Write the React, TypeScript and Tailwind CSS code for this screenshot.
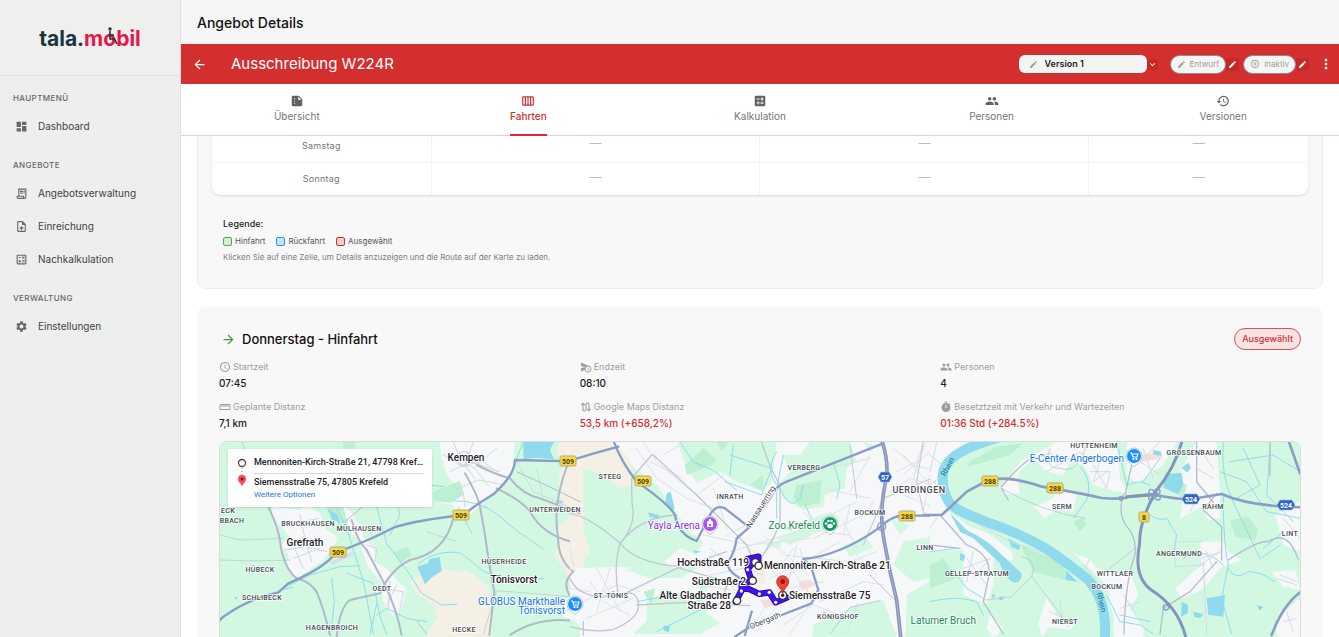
import type { ReactNode } from "react";
import {
  MdAccessTime,
  MdArrowBack,
  MdArrowForward,
  MdCalculate,
  MdCalendarViewWeek,
  MdDashboard,
  MdEdit,
  MdExpandMore,
  MdHistory,
  MdMoreVert,
  MdOutlineCalculate,
  MdOutlineReceiptLong,
  MdOutlineUploadFile,
  MdPauseCircleOutline,
  MdPeople,
  MdScheduleSend,
  MdSettings,
  MdStraighten,
  MdSummarize,
  MdTimer,
} from "react-icons/md";

const navigation = [
  {
    title: "Hauptmenü",
    items: [{ label: "Dashboard", icon: MdDashboard }],
  },
  {
    title: "Angebote",
    items: [
      { label: "Angebotsverwaltung", icon: MdOutlineReceiptLong },
      { label: "Einreichung", icon: MdOutlineUploadFile },
      { label: "Nachkalkulation", icon: MdOutlineCalculate },
    ],
  },
  {
    title: "Verwaltung",
    items: [{ label: "Einstellungen", icon: MdSettings }],
  },
];

const tabs = [
  { label: "Übersicht", icon: MdSummarize },
  { label: "Fahrten", icon: MdCalendarViewWeek, active: true },
  { label: "Kalkulation", icon: MdCalculate },
  { label: "Personen", icon: MdPeople },
  { label: "Versionen", icon: MdHistory },
];

const legend = [
  { label: "Hinfahrt", color: "border-[#4caf50] bg-[#d4ecd5]" },
  { label: "Rückfahrt", color: "border-[#2196f3] bg-[#c9e4fa]" },
  { label: "Ausgewählt", color: "border-[#d32f2f] bg-[#f3cdcd]" },
];

const RouteIcon = () => (
  <svg viewBox="0 0 24 24" className="h-3 w-3" fill="none" stroke="currentColor" strokeWidth="2.2">
    <path d="M6 5v12q0 3 3 3t3-3V7q0-3 3-3t3 3v12" />
    <path d="M2.500 8 6 4.500 9.500 8M14.500 16 18 19.500 21.500 16" />
  </svg>
);

const details = [
  { label: "Startzeit", value: "07:45", icon: <MdAccessTime size={12} /> },
  { label: "Endzeit", value: "08:10", icon: <MdScheduleSend size={12} /> },
  { label: "Personen", value: "4", icon: <MdPeople size={12} /> },
  { label: "Geplante Distanz", value: "7,1 km", icon: <MdStraighten size={12} /> },
  { label: "Google Maps Distanz", value: "53,5 km (+658,2%)", icon: <RouteIcon />, alert: true },
  {
    label: "Besetztzeit mit Verkehr und Wartezeiten",
    value: "01:36 Std (+284.5%)",
    icon: <MdTimer size={12} />,
    alert: true,
  },
];

const districts: [string, number, number][] = [
  ["STEEG", 390, 37],
  ["UNTERWEIDEN", 335, 70],
  ["BRUCKHAUSEN", 88, 84],
  ["MÜLHAUSEN", 139, 89],
  ["HÜBECK", 40, 130],
  ["SCHLIBECK", 42, 158],
  ["OEDT", 162, 149],
  ["HAGENBROICH", 112, 188],
  ["HÜSERHEIDE", 284, 122],
  ["HECKE", 244, 190],
  ["ECK", 8, 71],
  ["BBACH", 12, 81],
  ["ST. TÖNIS", 391, 156],
  ["INRATH", 510, 57],
  ["VERBERG", 584, 28],
  ["BOCKUM", 650, 73],
  ["LINN", 705, 108],
  ["KÖNIGSHOF", 618, 177],
  ["GELLEP-STRATUM", 757, 134],
  ["HÜTTENHEIM", 874, 6],
  ["GROSSENBAUM", 974, 13],
  ["SERM", 842, 67],
  ["RAHM", 993, 67],
  ["ANGERMUND", 959, 114],
  ["WITTLAER", 895, 134],
  ["BOCKUM", 887, 147],
  ["LINT", 1070, 94],
  ["NIERST", 845, 182],
];

const towns: [string, number, number][] = [
  ["Kempen", 246, 19],
  ["Grefrath", 85, 104],
  ["Tönisvorst", 294, 141],
];

const shields: [string, number, number][] = [
  ["509", 348, 19],
  ["509", 423, 39],
  ["509", 241, 73],
  ["509", 118, 110],
  ["288", 770, 39],
  ["288", 835, 46],
  ["288", 687, 74],
  ["8", 924, 75],
];

const motorways: [string, number, number][] = [
  ["57", 665, 35],
  ["524", 971, 57],
  ["524", 1066, 63],
];

const Pin = ({ x, y, color, children }: { x: number; y: number; color: string; children: ReactNode }) => (
  <g transform={`translate(${x} ${y})`}>
    <path d="M0 11C-2 8-8 6-8 0a8 8 0 0 1 16 0C8 6 2 8 0 11Z" fill="#fff" stroke="#9aa5b1" strokeWidth=".6" />
    <circle r="7" fill={color} />
    {children}
  </g>
);

const Cart = () => (
  <g fill="none" stroke="#fff" strokeWidth="1.200">
    <path d="M-4-3h1.500l1.500 4h4l1-3h-6" />
    <circle cx="-.5" cy="3" r=".5" />
    <circle cx="2.500" cy="3" r=".5" />
  </g>
);

// Terrain is drawn at three units per map pixel, labels at one
const Terrain = () => (
  <g transform="scale(.33333)" strokeLinejoin="round" strokeLinecap="round">
    <rect width="3240" height="960" fill="#d3f8e2" />

    {/* west: Grefrath, Kempen */}
    <g transform="translate(-30 -21)">
      <path fill="#f5f0e6" d="M600 440 640 415 700 400 740 412 770 405 830 450 850 520 845 597 850 900 660 900 650 597 682 550 670 510 640 490 615 470ZM1045 130 1060 85 1040 60 1050 21H1120V430L1080 440 1060 400 1030 360 1050 330 1045 280 1080 240 1050 200Z" />
      <g fill="#f6f7f9">
        <path d="M690 21C692 90 715 130 735 150L690 175 692 205 730 210 735 232 765 250 820 205 880 150 905 110 915 21Z" />
        <path d="M215 330 240 305 185 240 190 215 268 225 290 210 330 235 345 280 385 310 340 375 310 395 260 430 230 400 236 360Z" />
        <path d="M400 215 425 230 440 260 470 280 455 300 492 340 500 385 530 400 555 430 588 460 578 512 550 545 520 500 512 440 470 390 450 320 420 290Z" />
        <path d="M1080 480 1095 445 1120 430V560L1060 545 1050 520Z" />
      </g>
      <path fill="#bdefd2" d="M350 215h50l12 55-50-15ZM670 170l80-32 12 40-40 25-50-5ZM550 352l40-16 16 24-36 24ZM400 21h35v20h-35Z" />
      <g fill="#90daee">
        <path d="M940 21h92l-12 24 12 28-50-5-42 4ZM622 395l32-10 5-14 30-5 6 42-28 18-22 22ZM1040 195l20 3-4 8-18-4ZM72 487l12-2-4 9ZM352 222l30 15 8 25-22-8Z" />
      </g>
      <g fill="none" stroke="#90daee" strokeWidth="3">
        <path d="M96 21l8 22M380 220l30 60 25 80q30 90 35 130l20 107M500 215q15 60 30 110l60 80 45 70 60 35 45-2M730 197q80 0 130 40l60 50 80 55M625 385q60-45 130-30l60 50q60 40 185 25M220 460l80-40 90-25 60-3M365 430l8 70-10 90M500 540l30-20 60 30 60 10M540 300l30-60-12-50M660 150l40 5M940 21l-20 50M480 597l20-90M650 597l-30-40M745 215l40 80M210 465l40-8M410 290l-35-40" />
        <path d="M410 415l80 30 20 100 20 52" />
      </g>
      <g fill="none" stroke="#cfd7e1" strokeWidth="3">
        <path d="M225 345l60-10 65 15M240 310l40 90M270 240l15 70 20 70M235 270l90-20M250 370l80-30M700 60l60 30 60-10 40 30M720 110l60-30 90 30M730 21l20 50 45 30 40 50M790 21l-25 70 30 40M860 40l-60 50M735 165l70-30 80 15M740 190l20-15 5 40M470 330l30 10-5 40M520 460l60 10-10 50M540 440l-5 80M560 450l-30 60M920 80l50 90 140 60M1000 190l-20-90M1085 470l25 20M1060 530l50-20" />
        <path stroke="#bfd9cf" d="M30 375q120 5 210 0M30 300l60 15 130-5M650 290l90 30M820 597l40-130 250 20" />
      </g>
      <g fill="none" stroke="#afb9ca" strokeWidth="6">
        <path d="M170 205q40 80 42 130 14 70 48 95 45 12 62 45 20 50 38 125M380 605q10-90 40-110l90-20q30-70 90-100 105-20 130-125M425 255q15 60 45 90l50 95q40 80 55 160M765 115q40 70 45 100l15 85q12 90 28 170l-15 130M860 160q80 40 100 70 40 70 125 90 20 0 35 15M800 90q60 30 100 40 40 50 90 60l120 45M1072 90q-45 120-28 215 0 70 46 105-35 30-12 70M900 600q90-60 210-40" />
        <path strokeWidth="3" d="M920 110q90 40 190 90M405 260l70-60" />
        <circle cx="762" cy="72" r="22" strokeWidth="4" stroke="#cbd6df" />
      </g>
      <path fill="#d5dcec" d="M362 380l65-30 3 10-64 30Z" />
      <path fill="none" stroke="#8b9cc5" strokeWidth="7" d="M25 560 40 545Q120 490 205 472L235 445Q330 405 368 365L385 350Q480 315 550 278 620 255 760 240 790 215 850 178 915 120 915 75L1120 80" />
    </g>

    {/* centre: Krefeld */}
    <g transform="translate(1050 -21)">
      <path fill="#f6f7f9" d="M130 21H1110V900H0V430L20 400 120 395 260 400 330 340 380 360 400 320 360 290 325 240 260 150 190 95Z" />
      <path fill="#f5f0e6" d="M0 21H125L180 70 185 150 150 160 100 120 60 105 0 85ZM0 250 25 275 50 310 60 350 30 395 0 405ZM535 340 565 345 590 440 560 460 545 400Z" />
      <g fill="#d3f8e2">
        <path d="M325 21H620L612 90 600 150 570 165 500 140 450 110 380 145 350 100 335 60ZM640 60 690 60 720 21 840 21 860 80 830 100 825 160 765 180 760 215 700 225 640 190 625 150 660 110Z" />
        <path d="M170 405 260 360 310 400 400 390 330 430 240 430ZM230 500l50-30 120 15 10 50 40 30-60 32H190l40-40ZM0 550l30 20v330H0ZM620 310l60-20 20-30 80-30 30 20-60 40-90 40ZM780 545l70-30 90-20 40 110-30 295H700l30-330ZM1000 320l110-20v120l-80 20-60-50ZM960 250l60 20-30 30ZM820 330l70-20 20 30-70 25ZM1010 480l100-60v480h-110ZM435 430l-70 15 40 25ZM585 325l50-10-5 20-40 5ZM880 21l40 10-20 20Z" />
      </g>
      <path fill="#bdefd2" d="M345 90 400 40 440 75 425 90 350 120ZM440 21h35l-20 30ZM680 150l75-15-5 70-60 10-20-30ZM220 470l35-10-10 50ZM540 150l40-30v50ZM640 280l30-10-5 20Z" />
      <path fill="#fbdcdc" d="M685 440l35-8 15 20-40 15ZM570 495l50-5 5 20-40 8Z" />
      <g fill="#90daee">
        <path d="M235 232l30 8 5 12-32-7ZM290 175l12-5 12 50-10 10-18-30ZM280 572l20 2-4 18-14-5ZM370 345l25 5-22 5ZM1100 80l15 5v50l-15-5Z" />
      </g>
      <g fill="none" stroke="#90daee" strokeWidth="3">
        <path d="M330 21l40 60 60 25 70 60M490 30l-10 90M480 60l125 40-30 80-110-40M620 50q-40 60 10 110 30 70 60 30l10-40M640 60l-20 100 0 90M790 80l20 70-10 40M200 500l80-15 110 10M260 590l140-70M705 210l20 40" />
      </g>
      <g fill="none" stroke="#dce1e9" strokeWidth="3">
        <path d="M200 40l60 90 90 60 80 30M220 21l40 60 120 100M280 60l50-30M240 80l100 50M430 160l40 120M380 180l80-60M470 300l80-40 60-90M400 300l140 30 180-20M480 350l200-60 180-90M580 300l60 60 200 20 80-30M560 360l100 100 100-20M620 330l80 80M650 470l30-140M600 430l120-60 90-50M590 520l60-100 40-20M560 560l50-90M660 400l50 60 10 40M670 340l-50 70M420 420l100-20 60 20M380 450l140 20M420 340l60 50M700 230l60 60 80 10M730 310l150-70 30-40M820 260l40 80M840 210l-20 90M760 160l140 30M900 60l-60 110M780 100l120-30M970 40l60 50 80 20M980 110l60-30 30-60M1000 60l90 100M960 170l60-40 90 30M1060 21l-40 150M1090 40l-90 80M1000 180l100 40M1080 120l-20 110M0 460l60 10M60 440l40 60 80 40M40 500l100-50 70 20M80 400l70 130M120 400l-40 130M50 550l140-60M560 590l80-100M640 570l90-60 80 30M660 597l60-90M750 500l130-60 60 10M830 597l30-90M860 360l60 60M690 340l20 80M10 390l-10-50" />
      </g>
      <g fill="none" stroke="#bfc7d4">
        <path d="M185 130q0 90 5 100 0 50-40 98-20 60-5 155M0 235q60 10 150 90 50 60 180 70M150 325q60-80 170-85M145 485 320 400 470 350M0 430q30 70 145 50 50-20 60 20 10 50-80 85-60 8-125-10M200 510l150-8 190 10M575 21q20 70 55 130v110q-20 60-60 110M250 60 390 190 530 330 560 400M330 400l140 40M470 450l-20 70M40 560v40M185 130l60-70" strokeWidth="4" />
        <path d="M780 597l60-80 90-20M900 420l80 80M1110 240q-30 20-50-10l-20-90 20-119M860 190l-20-160M880 330l60-140 170-70" strokeWidth="3" />
      </g>
      <g fill="none" stroke="#8b9cc5" strokeWidth="7">
        <path d="M-10 80Q70 55 145 35M130 15q20 60 70 125 100 70 115 100 10 60 65 78l35-68q20-45 50-30l70 55M940 25 650 140q-30 10-50 50l-60 85-40 35q-5 40-25 70-10 30 55 60M700 372q110-10 230-95 40-40 80-35h100M705 375l20 25 20 65-20 40-90 35-95 35-45 30M525 600l20-70" />
        <path stroke="#8594ba" strokeWidth="11" d="M935 15q20 60 15 110-25 110-8 190 15 90 38 180l12 110" />
        <path stroke="#b9c4dc" strokeWidth="2" d="M935 15q20 60 15 110-25 110-8 190 15 90 38 180l12 110" />
        <circle cx="935" cy="275" r="12" strokeWidth="4" />
      </g>
    </g>

    {/* east: Rhein, Angermund */}
    <g transform="translate(2130 -21)">
      <g fill="#f6f7f9">
        <path d="M0 21H110L40 75 28 150 50 225 120 275 185 300 245 350 250 375 190 370 190 450 170 510 100 480 100 345 0 350Z" />
        <path d="M275 75 330 50 380 21H560L570 130 595 175 540 165 490 150 460 90 420 80 400 120 350 110 310 70 260 120 270 175 220 180 215 155ZM590 21H740L700 90 620 145 590 120ZM750 110 800 21 860 21 870 170 870 250 835 255 815 215 750 250 760 190Z" />
        <path d="M310 215 370 190 380 160 440 175 430 230 380 225 345 250ZM430 355 475 370 500 400 560 420 600 410 625 480 600 520 640 580V900H560L550 540 520 440ZM350 490l30 50 60 25-20 20-60-10-25 30-10-40ZM810 320h70l15 30 40 25-60 20-60 70-60 25-20-30 80-70ZM1035 240 1110 200V350L1060 330ZM1025 410l70-5 15 60-50-10ZM1040 550l70-60v410h-60ZM180 540l40 40-30 30-20-30Z" />
      </g>
      <g fill="#bdefd2">
        <path d="M120 80 200 35 280 25 240 60 110 95ZM430 262l28-15 12 20-20 22ZM900 255l55-10 30 40-10 30-60-10ZM270 330l120 50 40 60-120-30ZM0 390l40-20 40 60-80 30ZM720 130l50 20-10 50Z" />
      </g>
      <path fill="#fbdcdc" d="M630 60l60-10 5 20-55 10Z" />
      <g fill="#90daee">
        <path d="M705 118l50-5 5 35-15 30-45-20ZM755 98l20-15 8 15-12 15ZM668 45l25 5 3 12-25-3ZM830 490l55-10-5 65-45-5ZM755 500l20 10-2 25-20 10ZM790 530l30 8-10 12-18-5ZM90 355l15 5-3 18-12-2ZM410 405l12 15 20 20-35-5ZM235 310l35 20-2 15-25-8ZM185 480l8-2 2 8-8 2ZM208 486l12-2-2 10-10 2ZM980 510l20 5-10 12Z" />
        <path d="M60 235 110 285q60 30 90 60l75 70q0 35-30 25-25-20-35-55L130 310 90 290Z" />
      </g>
      <g fill="none" stroke="#90daee" strokeWidth="4">
        <path strokeWidth="30" strokeLinecap="butt" d="M215 5C70 45 35 85 38 130 40 220 80 225 180 265 340 320 390 370 470 430Q530 490 525 600V900" />
        <path d="M450 95q40 40 20 100l-40 55M560 21l30 130q40-20 70 0M880 21q-10 100 30 180l80 170 60-40M900 80l130-20 80 50M870 110l80 30 60 90 100 20M880 180q0 150 15 210l-20 100 30 107M895 400q20 40 60 10 40 0 80 30M1020 40l-10 140 80 80M940 40l50 110-70 40M660 240q30 20 50 10l30 50-10 60M880 390q-60-60-120-20M0 500q80-20 140 0l20 40M0 350l80-10M80 420l30 40 50 30M530 480l40 80 60 10 40 27M570 540l90 20M690 70l-50 70M1060 290l-60 50" strokeWidth="3" />
      </g>
      <g fill="none" stroke="#d3dae4" strokeWidth="3">
        <path d="M0 60l50 40M20 21l-20 90M0 150l40-30M300 75l60-20 50 30M350 110l100-60 40 30M480 110h60l-10 50M490 90l40 70M510 80l-20 60M530 110l-40 30M600 60l90 60M620 90l70-70M640 40l30 90M760 200l50-10M780 230l20-40M810 40l40 60M800 100l50 30M110 370l60 80M130 350l-20 90M100 400l80-30M130 430l50-60M460 390l80 90M480 370l-20 40M580 480l40 60M570 520l60-20M360 530l80 40M390 500l10 70M815 370l60-20M830 350l20 50M810 390l60-40M1060 250l50 60M1050 420l50 20M1040 430l60 20M1060 560l40-10M1070 530l20 60M820 380l10 217M735 320l0 75 90-5M735 320h80M20 250l-20 30M130 260l110 60 90 30" />
      </g>
      <g fill="none" stroke="#b4becc">
        <path d="M580 180q-20 60 15 100 25 30 20 80-30 80-33 237M605 90l-20 90M860 175l-40 50 55 50v100M800 21v120l50 60M895 375q90-60 120-55 60-40 90 55M860 380l-80 90-80 50-10 77M215 155q40-50 80-80M215 160l20 35M30 240l80 90q80 30 65 100l-15 70 60 97M0 330l90 10M1020 21v100" strokeWidth="4" />
        <path d="M215 160q120 70 250 90M360 40q-20 60 30 60 60 20 80-79M305 425l-60 60-80 10M305 425l70 90 40 60M305 425q20-50-30-60M540 400l75-60" strokeWidth="2" />
      </g>
      <g fill="none" stroke="#8b9cc5" strokeWidth="8">
        <path d="M-20 240H35Q90 190 110 170l60-32q60-20 165 17 110 18 180 34 60 5 80-3l80-6q80 15 110 12l90-15q90 40 260 40M1120 465q-60 40-95 135M1075 15l35 100" />
        <path stroke="#8594ba" strokeWidth="9" d="M757 15q-20 80-80 155-50 90-48 155-20 100 35 140 80 50 103 140M590 185l90-8" />
        <g strokeWidth="4">
          <circle cx="664" cy="188" r="8" />
          <circle cx="682" cy="170" r="8" />
          <circle cx="684" cy="188" r="7" />
          <circle cx="664" cy="170" r="7" />
          <circle cx="573" cy="190" r="6" />
          <circle cx="708" cy="517" r="8" />
        </g>
      </g>
    </g>
  </g>
);

const RouteLine = () => (
  <g transform="scale(.33333) translate(1050 -21)" strokeLinejoin="round" strokeLinecap="round">
    <g fill="none">
      <path d="M565 390v-25l-33 7 16 12-15 18 12 36-30 8v20l-18 34M515 460l22 2 31 15 30-5 19 30 34-14" stroke="#2a0cab" strokeWidth="19" />
      <path d="M565 390v-25l-33 7 16 12-15 18 12 36-30 8v20l-18 34M515 460l22 2 31 15 30-5 19 30 34-14" stroke="#3c14e8" strokeWidth="14" />
    </g>
    <g fill="#fff">
      <circle cx="533" cy="404" r="5" />
      <circle cx="514" cy="449" r="5" />
      <circle cx="514" cy="468" r="5" />
      <circle cx="568" cy="477" r="5" />
      <circle cx="598" cy="472" r="5" />
      <circle cx="617" cy="502" r="5" />
      <g stroke="#333" strokeWidth="4">
        <circle cx="556" cy="382" r="11" />
        <circle cx="566" cy="392" r="11" />
        <circle cx="548" cy="437" r="11" />
        <circle cx="501" cy="497" r="11" />
        <circle cx="638" cy="481" r="12" />
      </g>
    </g>
    <circle cx="638" cy="481" r="5" fill="#222" />
    <path d="M638 480c-2-22-18-25-18-40a18 18 0 0 1 36 0c0 15-16 18-18 40Z" fill="#ea4335" stroke="#b31412" strokeWidth="2" />
    <circle cx="638" cy="440" r="7" fill="#a50e0e" />
  </g>
);

const RouteMap = () => (
  <div className="relative h-80 overflow-hidden rounded-lg border border-[#d8dcdc]">
    <svg
      viewBox="0 0 1080 320"
      preserveAspectRatio="xMidYMin slice"
      className="h-full w-full font-['Roboto','Liberation_Sans',sans-serif]"
      role="img"
      aria-label="Karte der Route"
    >
      <Terrain />

      <g textAnchor="middle" fill="#454b52" stroke="#fff" strokeWidth="2" strokeLinejoin="round" paintOrder="stroke">
        <g className="text-[7px] font-medium tracking-wider">
          {districts.map(([name, x, y]) => (
            <text key={`${name}-${x}`} x={x} y={y} strokeOpacity=".7">
              {name}
            </text>
          ))}
        </g>
        <text x="699" y="51" className="text-[9px] font-medium tracking-wider">
          UERDINGEN
        </text>
        <g className="text-[10px] font-medium" fill="#202124">
          {towns.map(([name, x, y]) => (
            <text key={name} x={x} y={y}>
              {name}
            </text>
          ))}
        </g>
        <g className="text-[8px]">
          <text transform="translate(543 66) rotate(-58)">Nassauerring</text>
          <text transform="translate(546 181) rotate(-22)">Obergath</text>
        </g>
      </g>
      <g textAnchor="middle" fill="#1c7b98" className="text-[8px]">
        <text transform="translate(730 26) rotate(-62)">Rhein</text>
        <text transform="translate(879 161) rotate(76)">Rhein</text>
      </g>

      <g textAnchor="middle" className="text-[7px] font-bold">
        {shields.map(([name, x, y]) => (
          <g key={`${x}-${y}`}>
            <rect
              x={x - (name.length > 1 ? 8 : 5)}
              y={y - 5}
              width={name.length > 1 ? 16 : 10}
              height="10"
              rx="1.500"
              fill="#fcd836"
              stroke="#a8aa98"
              strokeWidth="1"
            />
            <text x={x} y={y + 3} fill="#3c3c28">
              {name}
            </text>
          </g>
        ))}
        {motorways.map(([name, x, y]) => (
          <g key={`${x}-${y}`} transform={`translate(${x} ${y})`}>
            <path
              d={name.length > 2 ? "M-6-5H6L9 0 6 5H-6L-9 0Z" : "M-4-5H4L7 0 4 5H-4L-7 0Z"}
              fill="#2f66c5"
              stroke="#9bb3dc"
              strokeWidth=".6"
            />
            <text y="3" fill="#fff">
              {name}
            </text>
          </g>
        ))}
      </g>

      <g className="text-[10px]" stroke="#fff" strokeWidth="2" strokeOpacity=".8" strokeLinejoin="round" paintOrder="stroke" textAnchor="end">
        <text x="480" y="87" fill="#9334e6">Yayla Arena</text>
        <text x="600" y="87" fill="#188a5b">Zoo Krefeld</text>
        <text x="345" y="163" fill="#1a73e8">GLOBUS Markthalle</text>
        <text x="345" y="172" fill="#1a73e8">Tönisvorst</text>
        <text x="904" y="20" fill="#1a73e8">E-Center Angerbogen</text>
        <text x="756" y="182" fill="#188a5b">Latumer Bruch</text>
      </g>

      <Pin x={490} y={82} color="#a855f7">
        <path d="M-3 3v-5l1.500-1.500h3L3-2v5ZM-1-5h2v2h-2Z" fill="#fff" />
        <path d="M-1 0h2v2h-2Z" fill="#a855f7" />
      </Pin>
      <Pin x={610} y={82} color="#119965">
        <g fill="#fff">
          <ellipse cy="2" rx="2.800" ry="2.200" />
          <circle cx="-4" cy="-.5" r="1.200" />
          <circle cx="-1.600" cy="-3" r="1.300" />
          <circle cx="1.600" cy="-3" r="1.300" />
          <circle cx="4" cy="-.5" r="1.200" />
        </g>
      </Pin>
      <Pin x={355} y={162} color="#1a8fff">
        <Cart />
      </Pin>
      <Pin x={914} y={14} color="#1a8fff">
        <Cart />
      </Pin>

      <RouteLine />
      <g className="text-[10px] font-medium" fill="#202124" stroke="#fff" strokeWidth="2" strokeLinejoin="round" paintOrder="stroke">
        <text x="544" y="127">Mennoniten-Kirch-Straße 21</text>
        <text x="569" y="157">Siemensstraße 75</text>
        <g textAnchor="end">
          <text x="529" y="124">Hochstraße 119</text>
          <text x="526" y="143">Südstraße 2</text>
          <text x="511" y="157">Alte Gladbacher</text>
          <text x="511" y="167">Straße 28</text>
        </g>
      </g>
    </svg>

    <div className="absolute left-2 top-[7px] flex w-[204px] gap-1.5 bg-white px-2 py-1.5 font-['Roboto','Liberation_Sans',sans-serif] text-[9px] font-medium text-[#202124] shadow">
      <svg viewBox="0 0 12 36" className="h-9 w-3 shrink-0" fill="none">
        <circle cx="6" cy="8" r="3.500" stroke="#444" strokeWidth="1.300" />
        <path d="M6 13v7" stroke="#999" strokeDasharray="1 2" />
        <path d="M6 33c0-5-4-5-4-9a4 4 0 0 1 8 0c0 4-4 4-4 9Z" fill="#ff4755" />
        <circle cx="6" cy="24" r="1.500" fill="#7d1620" />
      </svg>
      <div className="flex-1 whitespace-nowrap">
        <p className="border-b border-gray-300 pb-1 leading-3.5">Mennoniten-Kirch-Straße 21, 47798 Kref…</p>
        <p className="pt-px leading-3.5">Siemensstraße 75, 47805 Krefeld</p>
        <a href="#optionen" className="block text-[8px] font-normal leading-3 text-[#1a73e8]">
          Weitere Optionen
        </a>
      </div>
    </div>
  </div>
);

const Logo = () => (
  <a href="#start" aria-label="tala.mobil" className="relative text-[21px] font-bold leading-6 text-[#1b3441]">
    tala.<span className="text-[#e9164b]">mobil</span>
    <svg viewBox="0 0 12 18" className="absolute left-[67px] top-0 h-[18px] w-3" fill="none" stroke="#1b3441" strokeWidth="1.600">
      <circle cx="4" cy="2" r="1.700" fill="#1b3441" stroke="none" />
      <path d="M4 4v8h4.500l2.500 5M4 8h4" />
    </svg>
  </a>
);

const Sidebar = () => (
  <aside className="w-[181px] shrink-0 border-r border-[#e0e0e0] bg-[#eeeeee]">
    <div className="flex h-19 items-center justify-center border-b border-[#e2e2e2] bg-[#efefee] pt-0.5">
      <Logo />
    </div>
    <nav>
      {navigation.map((group) => (
        <div key={group.title}>
          <h2 className="px-[13px] pb-1.5 pt-4 text-[8px] font-medium uppercase leading-3 tracking-wider text-[#666]">
            {group.title}
          </h2>
          {group.items.map(({ label, icon: Icon }) => (
            <a
              key={label}
              href={`#${label.toLowerCase()}`}
              className="flex h-[33px] items-center gap-2.5 px-[15px] text-[10px] text-[#424242]"
            >
              <Icon size={13} className="text-[#666]" />
              {label}
            </a>
          ))}
        </div>
      ))}
    </nav>
  </aside>
);

const StatusChip = ({ label, icon }: { label: string; icon: ReactNode }) => (
  <div className="flex items-center">
    <span className="flex h-[19px] items-center gap-1 rounded-full border border-[#8d8d8d] bg-[#f5f5f5] px-1.5 text-[8px] text-[#9e9e9e]">
      {icon}
      {label}
    </span>
    <button type="button" aria-label={`${label} bearbeiten`} className="rounded-xs bg-[#c62828] p-0.5 text-white">
      <MdEdit size={9} />
    </button>
  </div>
);

const App = () => {
  return (
    <div className="flex h-screen overflow-hidden bg-white font-['Inter','Liberation_Sans',sans-serif] text-[#212121]">
      <Sidebar />

      <div className="flex min-w-0 flex-1 flex-col">
        <header className="flex h-11 shrink-0 items-center bg-[#f5f5f5] px-4 pt-0.5">
          <h1 className="text-sm font-medium text-[#111]">Angebot Details</h1>
        </header>

        <div className="flex h-10 shrink-0 items-center bg-[#d32f2f] pl-[11px] pr-[5px] text-white">
          <button type="button" aria-label="Zurück" className="mr-6">
            <MdArrowBack size={15} />
          </button>
          <h2 className="flex-1 pt-px text-[15px]">Ausschreibung W224R</h2>

          <div className="relative mr-3 flex items-center">
            <MdEdit size={9} className="absolute left-2.5 text-[#9e9e9e]" />
            <select
              aria-label="Version"
              className="h-[18px] w-32 appearance-none rounded-md bg-[#f5f5f5] pl-6.5 text-[9px] font-semibold text-[#212121]"
            >
              <option>Version 1</option>
            </select>
            <MdExpandMore size={11} className="rounded-xs bg-[#c62828]" />
          </div>
          <div className="flex gap-1">
            <StatusChip label="Entwurf" icon={<MdEdit size={9} />} />
            <StatusChip label="Inaktiv" icon={<MdPauseCircleOutline size={10} />} />
          </div>
          <button type="button" aria-label="Mehr" className="ml-[9px]">
            <MdMoreVert size={16} />
          </button>
        </div>

        <div role="tablist" className="flex h-13 shrink-0 border-b border-[#e5cfcf]">
          {tabs.map(({ label, icon: Icon, active }) => (
            <button
              key={label}
              type="button"
              role="tab"
              aria-selected={!!active}
              className="flex flex-1 justify-center"
            >
              <span
                className={`flex h-13 flex-col items-center pt-2.5 text-[10px] leading-4 ${
                  active ? "border-b-2 border-[#d32f2f] font-medium text-[#d32f2f]" : "text-[#757575]"
                }`}
              >
                <Icon size={14} className={active ? "" : "text-[#616161]"} />
                {label}
              </span>
            </button>
          ))}
        </div>

        <main className="flex min-h-0 flex-1 flex-col overflow-hidden px-4">
          <section className="-mt-2 shrink-0 rounded-lg border border-[#ececec] bg-[#f8f8f8] px-3.5 pb-[23px]">
            <div className="overflow-hidden rounded-b-lg bg-white shadow-sm">
              <table className="w-full table-fixed text-center">
                <colgroup>
                  <col className="w-1/5" />
                  <col className="w-3/10" />
                  <col className="w-3/10" />
                  <col className="w-1/5" />
                </colgroup>
                <tbody>
                  {["Samstag", "Sonntag"].map((day) => (
                    <tr key={day} className="h-[33px] border-b border-[#f3f3f3] last:border-b-0">
                      <th className="text-[9px] font-normal tracking-wide text-[#757575]">{day}</th>
                      {[1, 2, 3].map((slot) => (
                        <td key={slot} className="border-l border-[#f3f3f3] pb-1 text-xs leading-3 text-[#bdbdbd]">
                          —
                        </td>
                      ))}
                    </tr>
                  ))}
                </tbody>
              </table>
            </div>

            <div className="px-[11px] pt-[21px]">
              <h3 className="text-[9px] font-medium leading-4">Legende:</h3>
              <ul className="flex gap-[11px] pt-px text-[8px] leading-4 text-[#555]">
                {legend.map((entry) => (
                  <li key={entry.label} className="flex items-center gap-[3px]">
                    <span className={`h-[9px] w-[9px] rounded-xs border ${entry.color}`} />
                    {entry.label}
                  </li>
                ))}
              </ul>
              <p className="text-[8px] leading-4 text-[#7d7d7d]">
                Klicken Sie auf eine Zelle, um Details anzuzeigen und die Route auf der Karte zu laden.
              </p>
            </div>
          </section>

          <section className="mt-4.5 shrink-0 rounded-lg bg-[#f8f8f8] px-5.5 pt-5">
            <div className="flex items-center gap-1.5 pl-0.5">
              <MdArrowForward size={15} className="text-[#43a047]" />
              <h3 className="flex-1 text-[13px] font-medium leading-6 text-[#111]">Donnerstag - Hinfahrt</h3>
              <span className="rounded-full border border-[#d9534f] bg-[#f7e3e3] px-[7px] text-[9px] font-medium leading-5 text-[#d32f2f]">
                Ausgewählt
              </span>
            </div>

            <dl className="grid grid-cols-3 gap-y-2 pt-2">
              {details.map((detail) => (
                <div key={detail.label}>
                  <dt className="flex h-4 items-center gap-0.5 text-[9px] text-[#9e9e9e]">
                    {detail.icon}
                    {detail.label}
                  </dt>
                  <dd
                    className={`text-[10px] font-medium leading-4 ${detail.alert ? "text-[#d32f2f]" : "text-[#212121]"}`}
                  >
                    {detail.value}
                  </dd>
                </div>
              ))}
            </dl>

            <div className="py-2.5">
              <RouteMap />
            </div>
          </section>
        </main>
      </div>
    </div>
  );
};

export default App;
